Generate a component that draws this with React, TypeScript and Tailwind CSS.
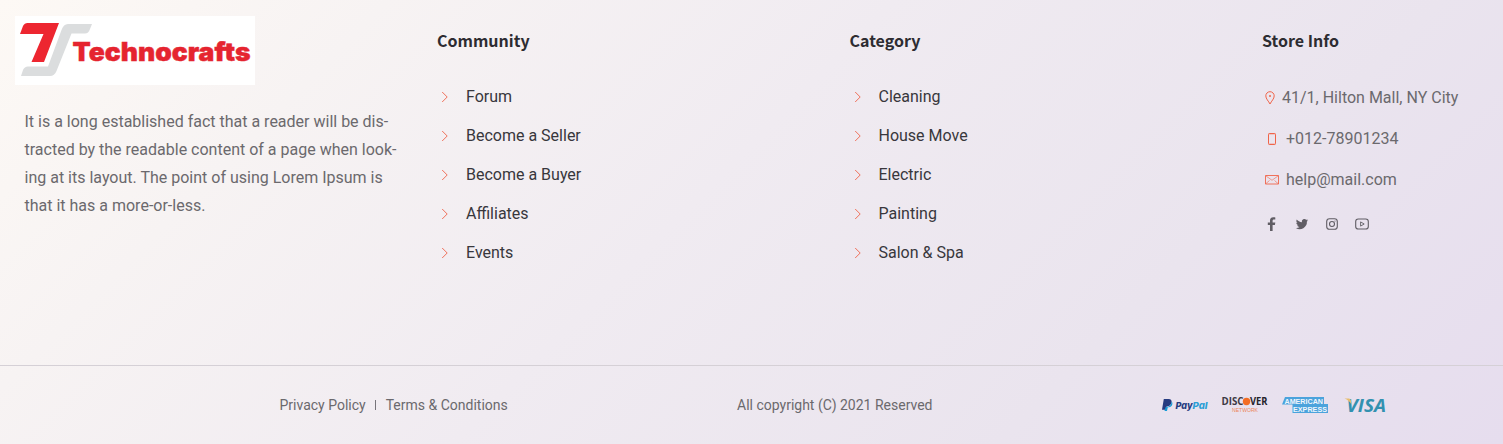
import type { ReactNode } from "react";

function Arrow() {
  return (
    <svg viewBox="0 0 8 12" className="h-[12px] w-[8px] shrink-0" fill="none" stroke="#f0705a" strokeWidth="1">
      <path d="M1.200 1 6.200 6 1.200 11" />
    </svg>
  );
}

function Logo() {
  return (
    <svg viewBox="0 0 240 69" className="block h-[69px] w-[240px] bg-white">
      <path d="M12.5 7H44L29 46H16.5L28.5 18H5L8 10Q9.5 7 12.5 7Z" fill="#ed2630" />
      <path
        d="M53 8H77L75 13Q73.500 17.500 70 17.500H56.500L41.500 55Q39.500 60 35 60H6L8 54Q9.500 50.500 13 50.500H33L46.500 14Q48.500 8 53 8Z"
        fill="#dbddde"
      />
      <text
        x="57.500"
        y="45.300"
        textLength="178"
        lengthAdjust="spacingAndGlyphs"
        fill="#e5242f"
        stroke="#e5242f"
        strokeWidth="0.4"
        className="font-['Inter',sans-serif] text-[25.500px] font-black"
      >
        Technocrafts
      </text>
    </svg>
  );
}

function Heading({ children }: { children: ReactNode }) {
  return (
    <h4 className="font-['Noto_Sans_CJK_SC',sans-serif] text-[16px] leading-[26px] font-bold text-[#2d2c31]">
      {children}
    </h4>
  );
}

function LinkColumn({ title, items }: { title: string; items: string[] }) {
  return (
    <div className="w-[412.5px] shrink-0 pt-[27px]">
      <Heading>{title}</Heading>
      <ul className="mt-[32px] flex flex-col gap-[15px] pl-1">
        {items.map((item) => (
          <li key={item} className="flex h-6 items-center gap-[17px] text-[16px] text-[#38373c]">
            <Arrow />
            <a href="#">{item}</a>
          </li>
        ))}
      </ul>
    </div>
  );
}

function PinIcon() {
  return (
    <svg viewBox="0 0 10 14" className="h-[14px] w-[10px]" fill="none" stroke="#f06449">
      <path d="M5 13C3.500 10 .8 7.800 .8 4.900a4.200 4.200 0 0 1 8.400 0C9.200 7.800 6.500 10 5 13Z" />
      <circle cx="5" cy="5" r="1" fill="#f06449" stroke="none" />
    </svg>
  );
}

function PhoneIcon() {
  return (
    <svg viewBox="0 0 8 14" className="h-[14px] w-[8px]" fill="none" stroke="#f06449">
      <rect x="0.5" y="1.500" width="7" height="11" rx="0.8" />
      <path d="M1 2h6M1 12h6" strokeWidth="0.5" />
    </svg>
  );
}

function MailIcon() {
  return (
    <svg viewBox="0 0 14 10" className="h-[10px] w-[14px]" fill="none" stroke="#f06449" strokeWidth="0.9">
      <path d="M.5.5h13v8.500H.5Z" />
      <path d="M.8.8 7 5.300 13.200.8M.8 8.700 4.500 5.500M13.200 8.700 9.500 5.500" strokeWidth="0.6" />
    </svg>
  );
}

function Socials() {
  return (
    <div className="mt-[24px] flex h-4 items-center pl-[2px] text-[#605d64]">
      <svg viewBox="0 0 10 14" className="mx-[3px] h-[14px] w-[10px]" fill="currentColor">
        <path d="M3 14V8H.8V5.500H3V3.500C3 1.300 4.300.2 6.300.2c.9 0 1.700.1 2 .2v2.200H7c-1.100 0-1.400.6-1.400 1.300v1.600h2.700L7.900 8H5.600v6Z" />
      </svg>
      <svg viewBox="0 0 24 24" className="ml-[15px] h-[14px] w-[14px]" fill="currentColor">
        <path d="M22.500 5.500c-.8.400-1.600.6-2.500.7.900-.5 1.600-1.400 1.900-2.400-.8.500-1.800.9-2.700 1.100a4.300 4.300 0 0 0-7.400 3.900C8.200 8.600 5 6.900 2.900 4.300a4.300 4.300 0 0 0 1.300 5.800c-.7 0-1.400-.2-2-.5 0 2.200 1.500 4 3.500 4.400-.6.200-1.300.2-2 .1.600 1.700 2.200 3 4.100 3A8.700 8.700 0 0 1 1.500 18.900a12.300 12.300 0 0 0 18.900-11c.8-.6 1.500-1.400 2.100-2.400Z" />
      </svg>
      <svg viewBox="0 0 12 12" className="ml-[17px] h-[12px] w-[12px]" fill="none" stroke="currentColor" strokeWidth="1.1">
        <rect x="0.7" y="0.7" width="10.600" height="10.600" rx="2.800" />
        <circle cx="6" cy="6" r="2.500" />
        <circle cx="9" cy="3" r="0.6" fill="currentColor" stroke="none" />
      </svg>
      <svg viewBox="0 0 14 12" className="ml-[17px] h-[12px] w-[14px]" fill="none" stroke="currentColor" strokeWidth="1.1">
        <rect x="0.7" y="1" width="12.600" height="10" rx="2.600" />
        <path d="m5.600 3.900 3.600 2.100-3.600 2.100Z" strokeWidth="0.9" />
      </svg>
    </div>
  );
}

function Payments() {
  return (
    <svg viewBox="0 -6 234 32" className="h-[32px] w-[234px]">
      <path d="M3.800 4h4.700c2.600 0 3.500 1.700 3 3.800C10.900 10 9.300 11.500 6.500 11.500l-.8 3.300H2Z" fill="#263b80" />
      <path d="M11.700 6.500c1 1 .9 3 0 4.200-.9 1.200-2.200 1.500-3.900 1.500L7 16H4.500l1.200-4h1.200C9.500 11.800 11.300 10 11.700 6.500Z" fill="#159bd7" />
      <g className="font-['Inter',sans-serif] text-[9.500px] font-extrabold italic">
        <text x="15.500" y="14" textLength="17" lengthAdjust="spacingAndGlyphs" fill="#263b80">Pay</text>
        <text x="32.500" y="14" textLength="15" lengthAdjust="spacingAndGlyphs" fill="#2b9fd6">Pal</text>
      </g>
      <g className="font-['Open_Sans',sans-serif] text-[10px] font-bold" fill="#3c3944">
        <text x="61.500" y="10" textLength="22" lengthAdjust="spacingAndGlyphs">DISC</text>
        <circle cx="86.500" cy="6.500" r="3.700" fill="#f36c24" />
        <text x="90" y="10" textLength="17.500" lengthAdjust="spacingAndGlyphs" fill="#25232b">VER</text>
      </g>
      <text x="72" y="17" textLength="26" lengthAdjust="spacingAndGlyphs" fill="#ec8659" className="font-['Liberation_Sans',sans-serif] text-[5.800px]">NETWORK</text>
      <path d="M125 2h39v7h4v9h-35.500V9.500H122Z" fill="#4ba3dc" />
      <g fill="#f0f6fc" className="font-['Liberation_Sans',sans-serif] text-[7.500px] font-bold">
        <text x="124.500" y="8.500" textLength="38.500" lengthAdjust="spacingAndGlyphs">AMERICAN</text>
        <text x="133" y="16.500" textLength="34" lengthAdjust="spacingAndGlyphs">EXPRESS</text>
      </g>
      <text x="186.500" y="16.500" textLength="39.500" lengthAdjust="spacingAndGlyphs" fill="#3291b0" className="font-['Open_Sans',sans-serif] text-[18px] font-bold italic">VISA</text>
      <path d="M184.500 3.500h4.300q1.700 0 2 1.800l.8 4.400q-2.400-4.500-7.100-6.200Z" fill="#e7bd6c" />
    </svg>
  );
}

export default function App() {
  return (
    <footer className="flex h-[444px] w-[1503px] flex-col overflow-hidden bg-[linear-gradient(135deg,#fdf9f5_0%,#f7f3f3_20%,#f0ebf1_46%,#eae4ee_74%,#e6ddee_100%)] font-['Roboto',sans-serif]">
      <div className="flex h-[365px]">
        <div className="w-[437px] shrink-0 pt-[16px] pl-[15px]">
          <Logo />
          <p className="mt-[23px] pl-[9.5px] text-[16px] leading-[28px] whitespace-nowrap text-[#6b696d]">
            It is a long established fact that a reader will be dis-
            <br />
            tracted by the readable content of a page when look-
            <br />
            ing at its layout. The point of using Lorem Ipsum is
            <br />
            that it has a more-or-less.
          </p>
        </div>
        <LinkColumn title="Community" items={["Forum", "Become a Seller", "Become a Buyer", "Affiliates", "Events"]} />
        <LinkColumn title="Category" items={["Cleaning", "House Move", "Electric", "Painting", "Salon & Spa"]} />
        <div className="pt-[27px]">
          <Heading>Store Info</Heading>
          <div className="mt-[33px] flex flex-col gap-[17px] pl-[3px] text-[16px] leading-6 text-[#6b696d]">
            <div className="flex items-center gap-[7px]"><PinIcon />41/1, Hilton Mall, NY City</div>
            <div className="flex items-center gap-[10px] pl-[3px]"><PhoneIcon />+012-78901234</div>
            <div className="flex items-center gap-[7px]"><MailIcon />help@mail.com</div>
          </div>
          <Socials />
        </div>
      </div>
      <div className="flex h-[79px] items-center border-t border-[#d5d0d6] text-[14px] text-[#6b696d]">
        <div className="ml-[279.5px] flex w-[457.500px] items-center">
          <a href="#">Privacy Policy</a>
          <span className="mr-[10px] ml-[9px] h-[10px] w-px bg-[#77747a]" />
          <a href="#">Terms &amp; Conditions</a>
        </div>
        <p className="w-[423px]">All copyright (C) 2021 Reserved</p>
        <Payments />
      </div>
    </footer>
  );
}
